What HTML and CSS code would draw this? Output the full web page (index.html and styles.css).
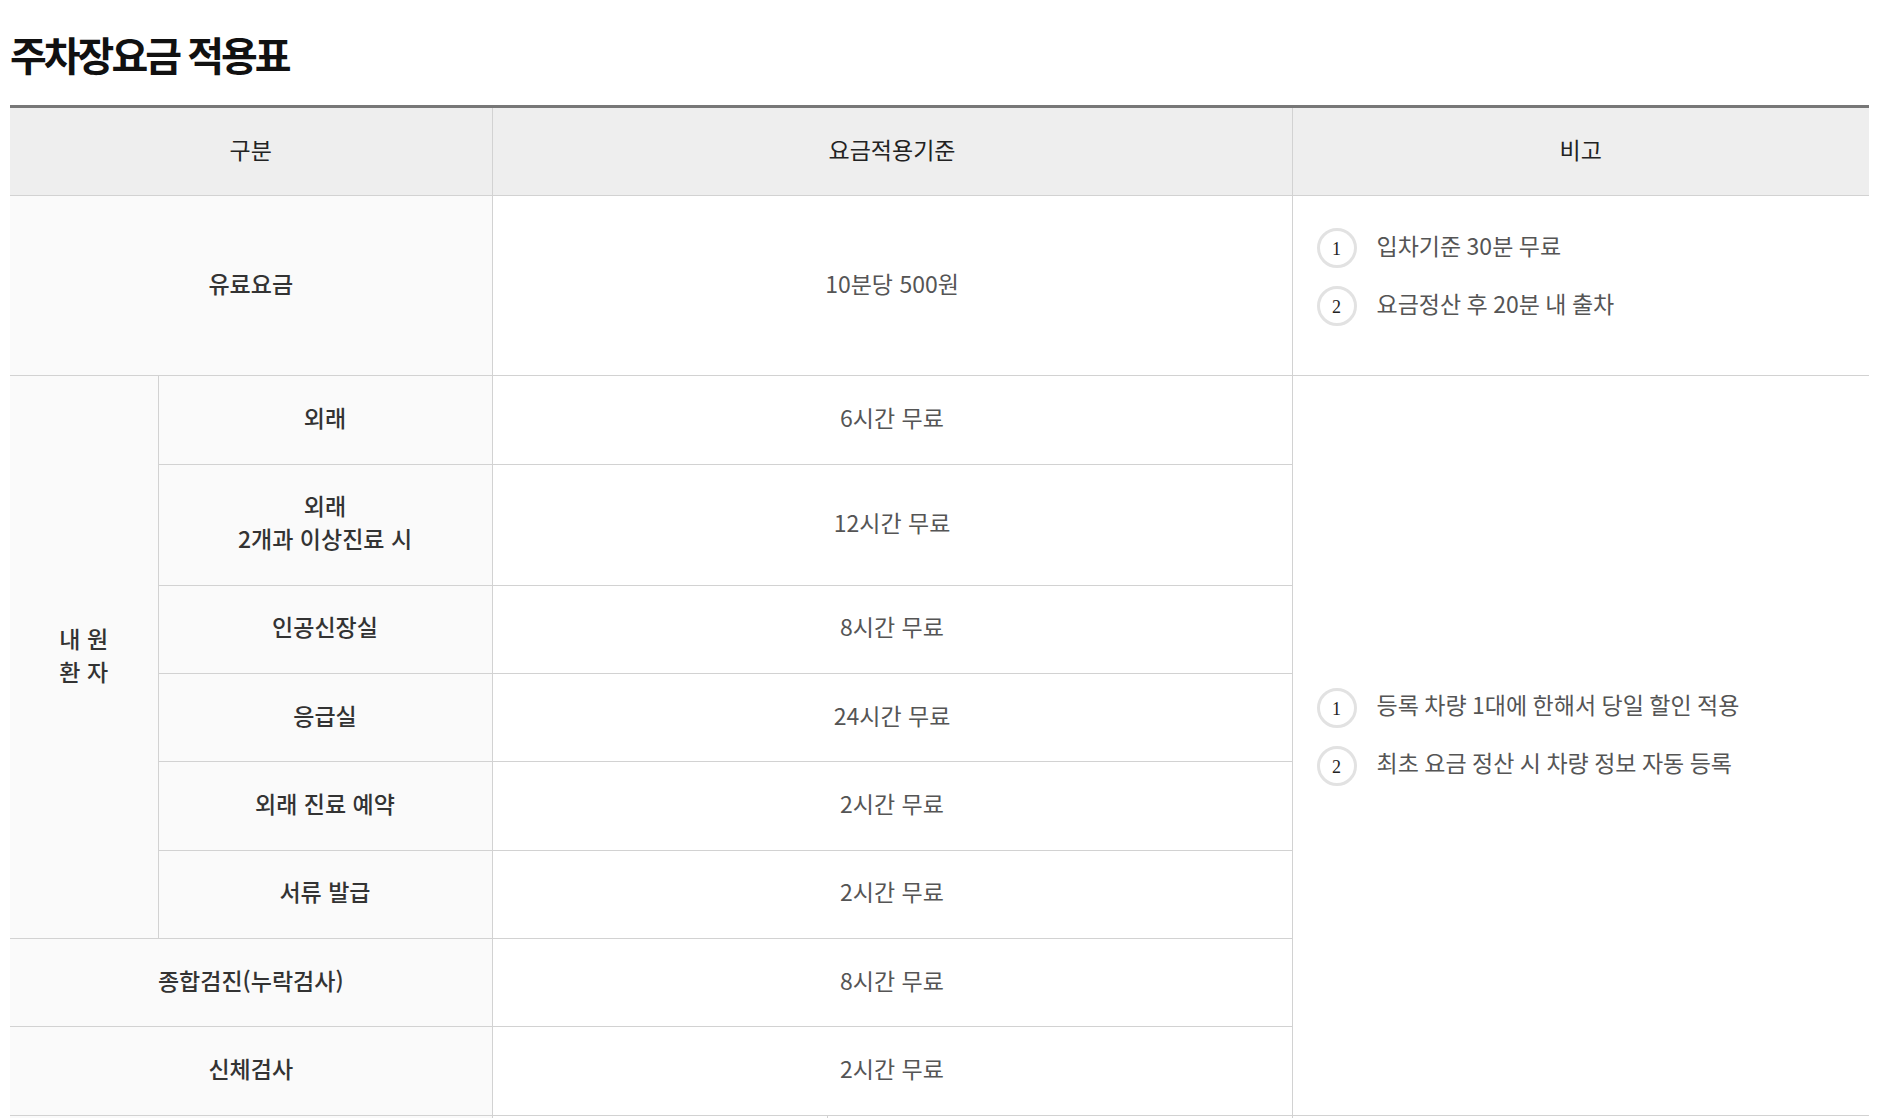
FILE: index.html
```html
<!DOCTYPE html>
<html lang="ko">
<head>
<meta charset="utf-8">
<title>주차장요금 적용표</title>
<link rel="stylesheet" href="styles.css">
</head>
<body>
<div class="page">
  <h2 class="title">주차장요금 적용표</h2>
  <table class="fee">
    <colgroup>
      <col class="c1">
      <col class="c2">
      <col class="c3">
      <col class="c4">
      <col class="c5">
    </colgroup>
    <thead>
      <tr>
        <th colspan="2">구분</th>
        <th colspan="2">요금적용기준</th>
        <th>비고</th>
      </tr>
    </thead>
    <tbody>
      <tr>
        <th colspan="2" class="cat">유료요금</th>
        <td colspan="2">10분당 500원</td>
        <td class="note first">
          <ol class="notes">
            <li><span class="num">1</span><span class="txt">입차기준 30분 무료</span></li>
            <li><span class="num">2</span><span class="txt">요금정산 후 20분 내 출차</span></li>
          </ol>
        </td>
      </tr>
      <tr>
        <th rowspan="6" class="cat">내 원<br>환 자</th>
        <th class="sub">외래</th>
        <td colspan="2">6시간 무료</td>
        <td rowspan="8" class="note">
          <ol class="notes">
            <li><span class="num">1</span><span class="txt">등록 차량 1대에 한해서 당일 할인 적용</span></li>
            <li><span class="num">2</span><span class="txt">최초 요금 정산 시 차량 정보 자동 등록</span></li>
          </ol>
        </td>
      </tr>
      <tr>
        <th class="sub">외래<br>2개과 이상진료 시</th>
        <td colspan="2">12시간 무료</td>
      </tr>
      <tr>
        <th class="sub">인공신장실</th>
        <td colspan="2">8시간 무료</td>
      </tr>
      <tr>
        <th class="sub">응급실</th>
        <td colspan="2">24시간 무료</td>
      </tr>
      <tr>
        <th class="sub">외래 진료 예약</th>
        <td colspan="2">2시간 무료</td>
      </tr>
      <tr>
        <th class="sub">서류 발급</th>
        <td colspan="2">2시간 무료</td>
      </tr>
      <tr>
        <th colspan="2" class="cat">종합검진(누락검사)</th>
        <td colspan="2">8시간 무료</td>
      </tr>
      <tr>
        <th colspan="2" class="cat">신체검사</th>
        <td colspan="2">2시간 무료</td>
      </tr>
      <tr class="next">
        <th colspan="2" class="cat"></th>
        <td></td>
        <td></td>
        <td></td>
      </tr>
    </tbody>
  </table>
</div>
</body>
</html>
```

FILE: styles.css
```css
html, body {
  margin: 0;
  padding: 0;
  background: #ffffff;
}

body {
  font-family: "Noto Sans CJK KR", "Noto Sans", sans-serif;
  color: #333;
  overflow: hidden;
}

.page {
  padding: 31px 10px 0;
}

.title {
  margin: 0 0 27px;
  font-size: 40px;
  line-height: 47px;
  font-weight: 700;
  letter-spacing: -3px;
  color: #111;
}

.fee {
  width: 100%;
  table-layout: fixed;
  border-collapse: collapse;
  border-top: 3px solid #777;
  font-size: 23px;
  line-height: 33px;
  letter-spacing: 0;
}

.c1 { width: 148px; }
.c2 { width: 334px; }
.c3 { width: 335px; }
.c4 { width: 465px; }
.c5 { width: auto; }

.fee th,
.fee td {
  padding: 24.5px 10px 29.8px;
  text-align: center;
  vertical-align: middle;
  border: 1px solid #d2d2d2;
}

.fee tr > :first-child { border-left: none; }
.fee tr > :last-child { border-right: none; }

.fee thead th {
  background: #eeeeee;
  color: #222;
  font-weight: 400;
}

.fee tbody th {
  background: #fafafa;
  color: #333;
  font-weight: 500;
}

.fee tbody td {
  background: #ffffff;
  color: #555;
  font-weight: 400;
}

.fee .note {
  text-align: left;
  padding: 31px 24px 32px;
}

.fee tbody th.sub {
  border-left: 1px solid #d2d2d2;
}

.fee .next th,
.fee .next td {
  padding: 10px;
  height: 40px;
}

.notes {
  list-style: none;
  margin: 0;
  padding: 0 0 16px;
}

.notes li {
  display: flex;
  align-items: center;
  gap: 20px;
  height: 42px;
  margin-bottom: 16px;
  color: #555;
}

.notes li:last-child {
  margin-bottom: 0;
}

.txt {
  margin-top: -6px;
  word-spacing: -1px;
}

.num {
  flex: none;
  box-sizing: border-box;
  width: 40px;
  height: 40px;
  border: 3px solid #e2e2e2;
  border-radius: 50%;
  display: flex;
  align-items: center;
  justify-content: center;
  font-family: "Liberation Serif", serif;
  font-size: 18px;
  line-height: 1;
  letter-spacing: 0;
  color: #222;
  padding-top: 2px;
}
```
